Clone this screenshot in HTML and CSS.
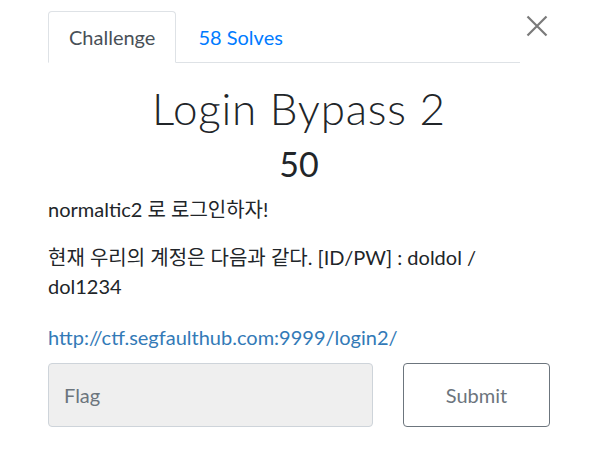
FILE: index.html
```html
<!DOCTYPE html>
<html>
<head>
<meta charset="utf-8">
<link rel="stylesheet" href="styles.css">
</head>
<body>
<div class="modal">
  <div class="head">
    <nav class="tabs">
      <div class="tab active">Challenge</div>
      <div class="tab link">58 Solves</div>
    </nav>
    <button class="close" aria-label="Close">
      <svg width="22" height="22" viewBox="0 0 22 22"><path d="M1.5 1.5 L20.5 20.5 M20.5 1.5 L1.5 20.5" stroke="#7a7a7a" stroke-width="2.2" fill="none"/></svg>
    </button>
  </div>
  <h2 class="title">Login Bypass 2</h2>
  <h3 class="value">50</h3>
  <div class="desc">
    <p>normaltic2 로 로그인하자!</p>
    <p>현재 우리의 계정은 다음과 같다. [ID/PW] : doldol / dol1234</p>
    <p class="url"><a href="#">http://ctf.segfaulthub.com:9999/login2/</a></p>
  </div>
  <div class="submit-row">
    <div class="flag">Flag</div>
    <button class="submit">Submit</button>
  </div>
</div>
</body>
</html>
```
FILE: styles.css
```css
* { box-sizing: border-box; }
html, body { margin: 0; padding: 0; background: #fff; }
body {
  font-family: Lato, "Noto Sans CJK KR", sans-serif;
  color: #212529;
  width: 603px;
  height: 452px;
  overflow: hidden;
}
.modal {
  padding: 11px 53px 0 48px;
}
.head {
  display: flex;
  align-items: flex-start;
}
.tabs {
  display: flex;
  width: 472px;
  border-bottom: 1px solid #dee2e6;
}
.tab {
  height: 52px;
  padding: 0 20px;
  display: flex;
  align-items: center;
  font-size: 20px;
  margin-bottom: -1px;
}
.tab.active {
  color: #495057;
  border: 1px solid #dee2e6;
  border-bottom-color: #fff;
  border-radius: 4px 4px 0 0;
  background: #fff;
}
.tab.link {
  color: #007bff;
  padding-left: 22px;
}
.close {
  border: 0;
  background: none;
  padding: 0;
  margin: 4px 0 0 6px;
  width: 22px;
  height: 22px;
  line-height: 0;
}
.title {
  margin: 19px 0 0;
  text-align: center;
  font-weight: 300;
  font-size: 44px;
  line-height: 52px;
  letter-spacing: 0.8px;
}
.value {
  margin: 10px 0 0;
  text-align: center;
  font-weight: 400;
  font-size: 34px;
  line-height: 40px;
}
.desc {
  margin-top: 11px;
  font-size: 20px;
  line-height: 29px;
}
.desc p { margin: 0 0 19px; }
.desc p.url { margin: 22px 0 11px; }
.url a { color: #337ab7; text-decoration: none; }
.submit-row {
  display: flex;
  justify-content: space-between;
}
.flag {
  width: 325px;
  height: 64px;
  background: #efefef;
  border: 1px solid #ced4da;
  border-radius: 4px;
  display: flex;
  align-items: center;
  padding-left: 15px;
  font-size: 20px;
  color: #6c757d;
}
.submit {
  width: 147px;
  height: 64px;
  background: #fff;
  border: 1px solid #6c757d;
  border-radius: 4px;
  font-family: Lato, sans-serif;
  font-size: 20px;
  color: #6c757d;
}
```
